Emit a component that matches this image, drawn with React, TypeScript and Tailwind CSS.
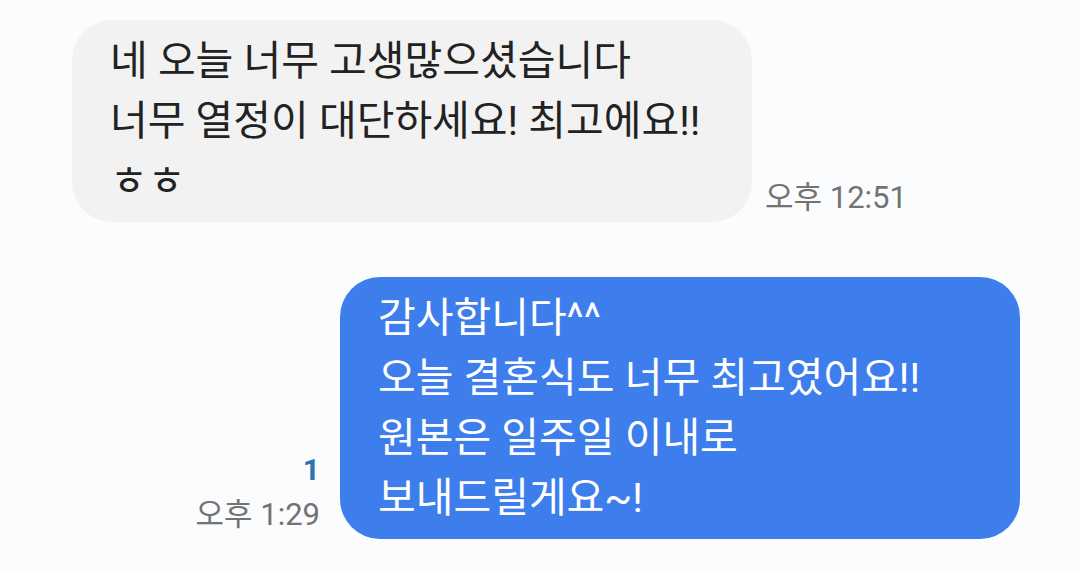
export default function App() {
  const font = { fontFamily: 'Roboto, "Noto Sans CJK KR", "Noto Sans", sans-serif' };
  return (
    <div className="w-[1080px] h-[571px] bg-[#fbfcfe] overflow-hidden" style={font}>
      <div className="flex items-end pl-[72px] pt-[20px]">
        <div className="w-[680px] rounded-[40px] bg-[#f2f2f2] px-[38px] py-[11px] text-[41px] leading-[60px] text-[#222222]">
          <div>네 오늘 너무 고생많으셨습니다</div>
          <div>너무 열정이 대단하세요! 최고에요!!</div>
          <div>ㅎㅎ</div>
        </div>
        <div className="ml-[13px] mb-[4px] text-[31px] leading-[40px] text-[#737373]">오후 12:51</div>
      </div>
      <div className="flex items-end justify-end pr-[60px] mt-[55px]">
        <div className="mr-[20px] mb-[4px] flex flex-col items-end">
          <div className="text-[30px] leading-[30px] font-bold text-[#2c73b3] mb-[10px]">1</div>
          <div className="text-[31px] leading-[40px] text-[#737373]">오후 1:29</div>
        </div>
        <div className="w-[680px] rounded-[40px] bg-[#3e7eec] px-[38px] py-[11px] text-[41px] leading-[60px] text-white">
          <div>감사합니다^^</div>
          <div>오늘 결혼식도 너무 최고였어요!!</div>
          <div>원본은 일주일 이내로</div>
          <div>보내드릴게요~!</div>
        </div>
      </div>
    </div>
  );
}
